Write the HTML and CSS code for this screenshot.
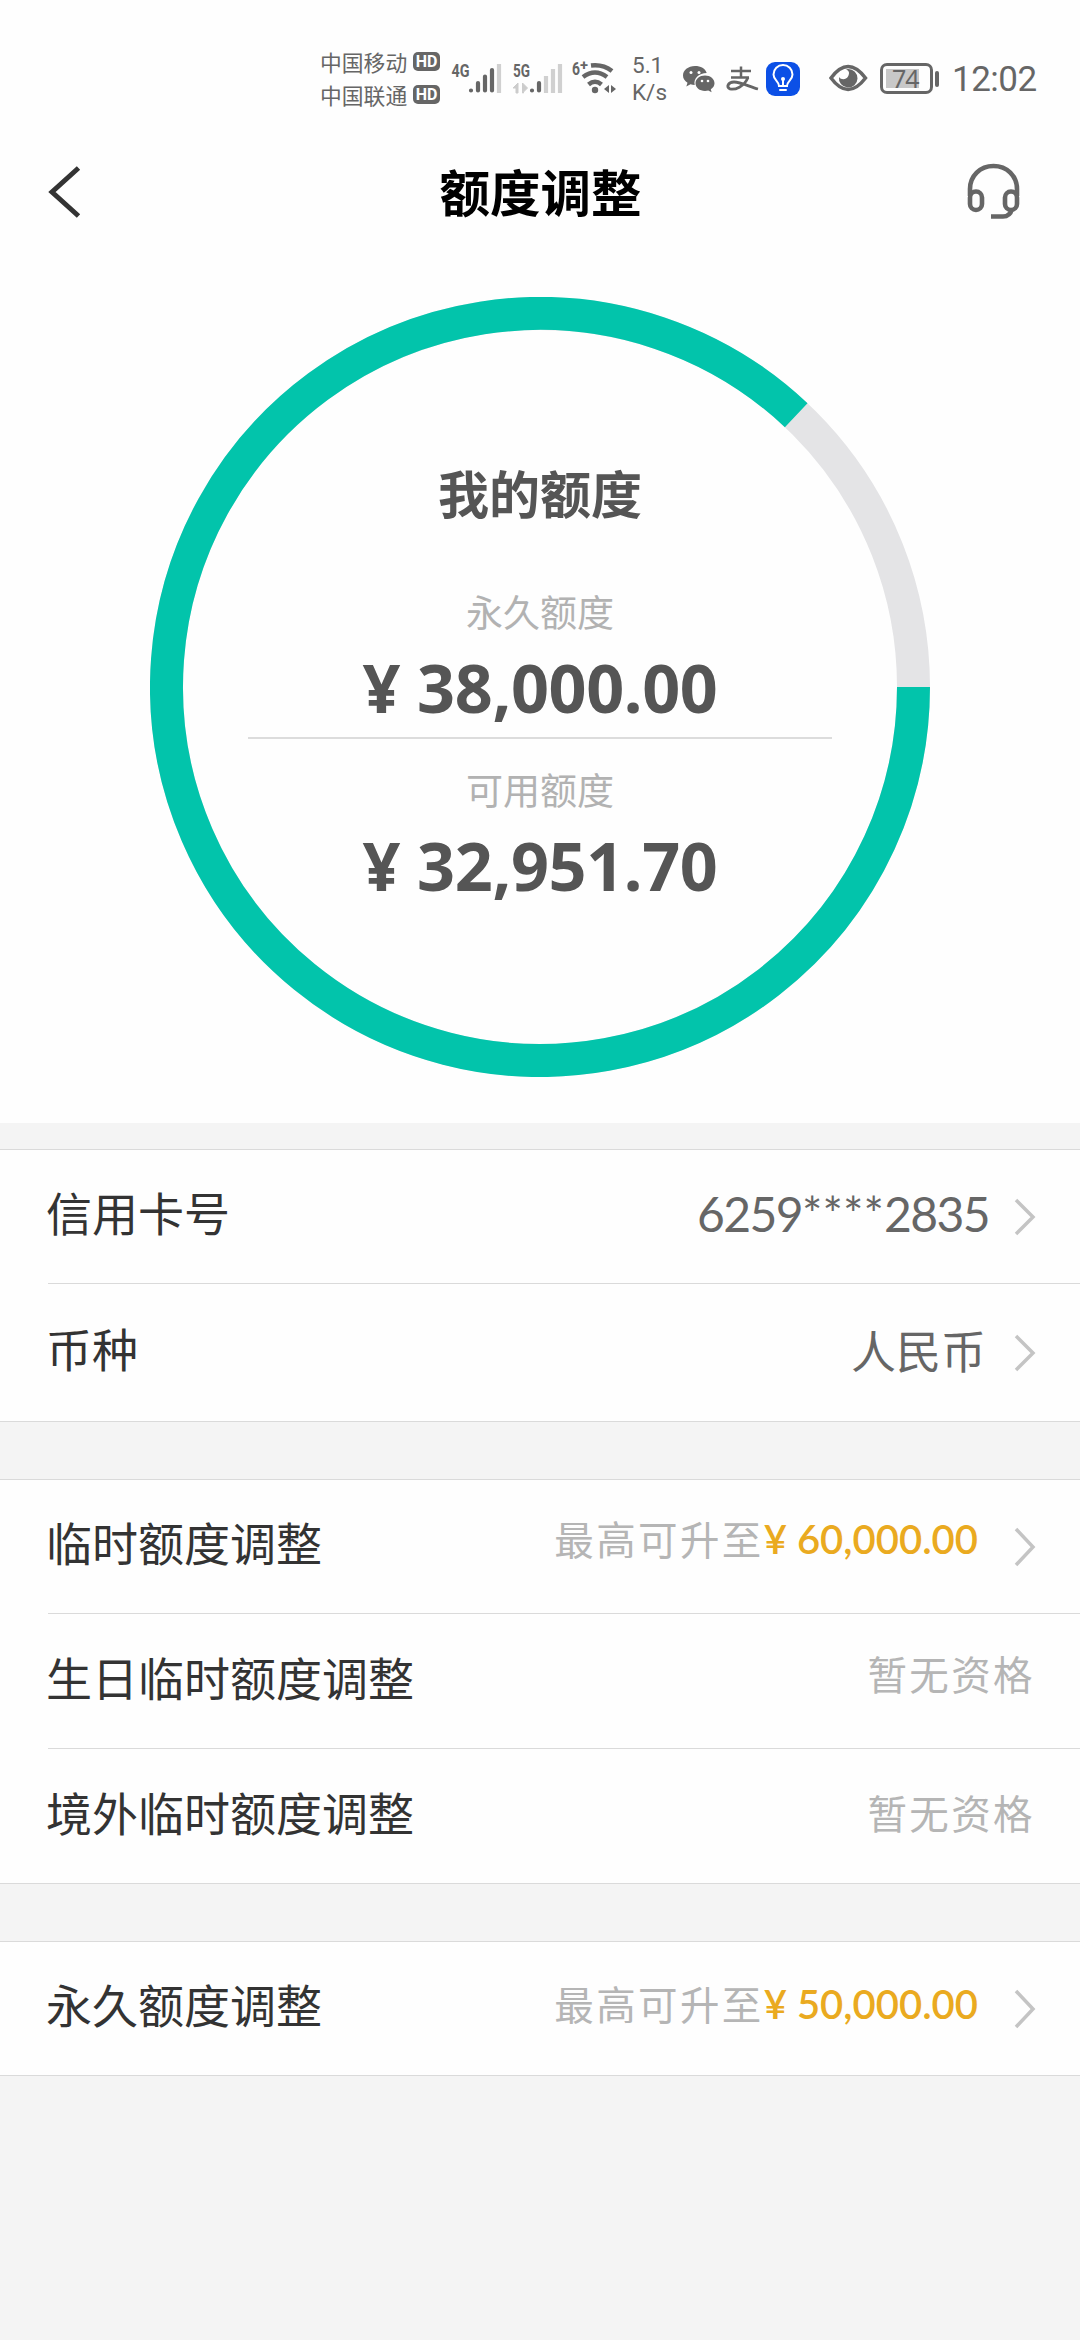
FILE: index.html
```html
<!DOCTYPE html>
<html lang="zh-CN">
<head>
<meta charset="utf-8">
<title>额度调整</title>
<link rel="stylesheet" href="styles.css">
</head>
<body>
<header class="status">
  <div class="carriers">
    <div class="carrier">中国移动<span class="hd">HD</span></div>
    <div class="carrier">中国联通<span class="hd">HD</span></div>
  </div>
  <svg class="signals" viewBox="440 50 180 60" width="180" height="60">
    <g font-family="Roboto, sans-serif" font-weight="700" fill="#666">
      <text x="451.500" y="76.500" font-size="19" textLength="18" lengthAdjust="spacingAndGlyphs">4G</text>
      <text x="513" y="76.500" font-size="19" textLength="17" lengthAdjust="spacingAndGlyphs">5G</text>
      <text x="572" y="75" font-size="18" textLength="8" lengthAdjust="spacingAndGlyphs">6</text>
      <text x="580" y="70" font-size="14" textLength="8" lengthAdjust="spacingAndGlyphs">+</text>
    </g>
    <g stroke="#666" stroke-width="4.200" stroke-linecap="round">
      <path d="M471 90.500V90.500M478 83V90.500M485 76.500V90.500M492 70V90.500"/>
      <path d="M532 90.500V90.500M539 83V90.500"/>
    </g>
    <path d="M499 64V93M546 76V93M553 69V93M560 64V93" stroke="#d0d0d0" stroke-width="4.200"/>
    <path d="M518 83v10h-2v-5h-3zM522.500 83v10h1v-1l4-4z" fill="#ccc" stroke="#ccc"/>
    <g fill="none" stroke="#666" stroke-width="4.500">
      <path d="M591 65.500Q603 64 612 71"/>
      <path d="M583 77Q595 68 607 77"/>
      <path d="M588.500 84.500Q595 79 601.500 84.500"/>
    </g>
    <circle cx="595" cy="90" r="3.200" fill="#666"/>
    <path d="M609 85v8l-5-4zM611 85v8l5-4z" fill="#666"/>
  </svg>
  <div class="speed">5.1<br>K/s</div>
  <svg class="apps" viewBox="680 58 124 42" width="124" height="42">
    <path d="M695 66c-7 0-12 4.300-12 9.500 0 3 1.700 5.500 4.500 7.300l-1.200 3.600 4.200-2.100c1.300.4 2.700.6 4.200.6-1.500-7 4.500-12 12-12-1.300-4.200-6-6.900-11.700-6.900z" fill="#666"/>
    <path d="M705 75.500c-5.500 0-9.500 3.500-9.500 7.800s4 7.700 9.500 7.700c1.200 0 2.300-.2 3.300-.5l3.300 1.700-.8-2.900c2.300-1.400 3.700-3.500 3.700-6 0-4.300-4-7.800-9.500-7.800z" fill="#666"/>
    <g fill="#fff"><circle cx="691" cy="72.500" r="1.500"/><circle cx="699" cy="72.500" r="1.500"/><circle cx="702" cy="81" r="1.300"/><circle cx="708" cy="81" r="1.300"/></g>
    <g fill="none" stroke="#666" stroke-width="2.500">
      <path d="M731 71H751M741 66.500V77M731 77.500H749"/>
      <path d="M748 77.500C744 87 735 90 730 89C726 87 728 82 734 82C741 82 750 87 758 89" stroke-width="2.800"/>
    </g>
    <rect x="766" y="62" width="34" height="34" rx="9" fill="#0c50e6"/>
    <g fill="none" stroke="#fff" stroke-width="2" stroke-linecap="round">
      <path d="M779 86c0-5-5.500-6-5.500-11.500a9.500 9.500 0 0 1 19 0C792.500 80 787 81 787 86z"/>
      <path d="M780 90H786M783 79V85"/>
    </g>
    <circle cx="783" cy="79" r="2" fill="#fff"/>
  </svg>
  <svg class="eye" viewBox="828 64 40 28" width="40" height="28">
    <path d="M831 78Q848 55 865.500 78Q848 101 831 78z" fill="none" stroke="#666" stroke-width="3.500"/>
    <path d="M848 69a9.300 9.300 0 1 1-9 8c2 3 7 3 9-.5s1-6-2-7z" fill="#666"/>
  </svg>
  <div class="battery"><span class="charge">74</span></div>
  <div class="clock">12:02</div>
</header>

<nav class="titlebar">
  <svg viewBox="0 0 64 56" width="64" height="56"><path d="M35.500 4L9 28L35.500 52" fill="none" stroke="#333" stroke-width="5"/></svg>
  <h1 class="title">额度调整</h1>
  <svg viewBox="960 160 64 64" width="64" height="64" fill="none" stroke="#666" stroke-width="4.600">
    <path d="M970 196V189C970 176 980 166 993.500 166S1017 176 1017 189V196"/>
    <rect x="970" y="191.500" width="12" height="18.500" rx="6"/>
    <rect x="1005" y="191.500" width="12" height="18.500" rx="6"/>
    <path d="M1012 209Q1010 216.500 1003 216.500H991"/>
  </svg>
</nav>

<section class="gauge">
  <svg class="ring" viewBox="0 0 780 780" fill="none" stroke-width="33">
    <circle cx="390" cy="390" r="373.500" stroke="#e4e4e6"/>
    <path d="M763.500 390A373.500 373.500 0 1 1 646.200 118.200" stroke="#02c4ab"/>
  </svg>
  <div class="summary">
    <h2 class="heading">我的额度</h2>
    <div class="label">永久额度</div>
    <div class="amount">¥ 38,000.00</div>
    <div class="rule"></div>
    <div class="label">可用额度</div>
    <div class="amount">¥ 32,951.70</div>
  </div>
</section>

<main class="groups">
  <section class="group">
    <div class="row"><span class="name">信用卡号</span><span class="value num">6259<span class="stars">****</span>2835</span><svg class="arrow" viewBox="0 0 24 40"><path d="M3 3L20 20L3 37"/></svg></div>
    <div class="row tall"><span class="name">币种</span><span class="value">人民币</span><svg class="arrow" viewBox="0 0 24 40"><path d="M3 3L20 20L3 37"/></svg></div>
  </section>
  <section class="group">
    <div class="row"><span class="name">临时额度调整</span><span class="hint">最高可升至<b class="money">¥ 60,000.00</b></span><svg class="arrow" viewBox="0 0 24 40"><path d="M3 2L20 20L3 38"/></svg></div>
    <div class="row"><span class="name">生日临时额度调整</span><span class="hint none">暂无资格</span></div>
    <div class="row"><span class="name">境外临时额度调整</span><span class="hint none low">暂无资格</span></div>
  </section>
  <section class="group">
    <div class="row"><span class="name">永久额度调整</span><span class="hint">最高可升至<b class="money">¥ 50,000.00</b></span><svg class="arrow" viewBox="0 0 24 40"><path d="M3 2L20 20L3 38"/></svg></div>
  </section>
</main>
</body>
</html>
```
FILE: styles.css
```css
* { box-sizing: border-box; }
body {
  margin: 0;
  width: 1080px;
  height: 2340px;
  overflow: hidden;
  background: #f4f4f4;
  color: #333;
  font-family: "Noto Sans", "Noto Sans CJK SC", sans-serif;
}
svg { display: block; flex: none; }
h1, h2 { margin: 0; }

.status {
  display: flex;
  height: 130px;
  padding-left: 320px;
  background: #fefefe;
  color: #666;
}
.carriers { width: 120px; padding-top: 45px; }
.carrier {
  display: flex;
  align-items: center;
  height: 33px;
  font: 21.8px/31px "Noto Sans CJK SC", sans-serif;
  white-space: nowrap;
}
.hd {
  width: 28px;
  height: 19px;
  margin-left: 6px;
  border-radius: 5px;
  background: #666;
  color: #fff;
  font: bold 16px/19px Roboto, sans-serif;
  text-align: center;
}
.signals { margin-top: 50px; }
.speed {
  width: 60px;
  padding: 52px 0 0 12px;
  font: 22.5px/27px Roboto, sans-serif;
}
.apps { margin-top: 58px; }
.eye { margin: 64px 0 0 24px; }
.battery {
  position: relative;
  width: 53px;
  height: 31px;
  margin: 63px 0 0 12px;
  padding: 3px;
  border: 3px solid #666;
  border-radius: 7px;
}
.battery::after {
  position: absolute;
  content: "";
  left: 52px;
  top: 5px;
  width: 4px;
  height: 16px;
  border-radius: 2px;
  background: #666;
}
.charge {
  display: block;
  width: 33px;
  height: 19px;
  background: #c8c8c8;
  font: 25px/18px "Noto Sans", sans-serif;
  text-indent: 6px;
  letter-spacing: -1px;
}
.clock {
  margin-left: 19px;
  padding-top: 60px;
  font: 35px/40px Roboto, sans-serif;
  letter-spacing: -0.5px;
}

.titlebar {
  display: flex;
  align-items: center;
  justify-content: space-between;
  height: 124px;
  padding: 0 56px 0 43px;
  background: #fefefe;
}
.title {
  margin: -5px -14px 0 0;
  color: #000;
  font: bold 50.5px/60px "Noto Sans CJK SC", sans-serif;
}

.gauge {
  display: grid;
  justify-content: center;
  height: 869px;
  padding-top: 43px;
  background: #fefefe;
}
.ring, .summary { grid-area: 1 / 1; width: 780px; height: 780px; }
.summary {
  display: flex;
  flex-direction: column;
  align-items: center;
  padding-top: 165px;
}
.heading {
  color: #555;
  font: bold 51px/60px "Noto Sans CJK SC", sans-serif;
}
.label {
  margin-top: 64px;
  color: #b2b2b2;
  font: 37px/50px "Noto Sans CJK SC", sans-serif;
}
.amount {
  margin-top: 16px;
  color: #555;
  font: bold 66.5px/70px "Noto Sans", sans-serif;
  letter-spacing: -0.4px;
  white-space: nowrap;
}
.rule { width: 584px; height: 2px; margin-top: 15px; background: #dcdcdc; }
.rule + .label { margin-top: 25px; }

.groups { display: flex; flex-direction: column; gap: 57px; padding-top: 26px; }
.group { border: solid #dadada; border-width: 1px 0; background: #fefefe; }
.row {
  display: flex;
  align-items: center;
  height: 133px;
  margin-left: 48px;
  padding-right: 43px;
}
.row + .row { height: 135px; border-top: 1px solid #dadada; }
.row + .row.tall { height: 138px; }
.name {
  margin: -11px auto 0 -2px;
  font: 46px/60px "Noto Sans CJK SC", sans-serif;
}
.value {
  margin-top: -5px;
  color: #666;
  font: 45px/60px "Noto Sans CJK SC", sans-serif;
}
.num {
  margin-right: -3px;
  font-family: Lato, sans-serif;
  font-size: 48px;
  letter-spacing: -1.6px;
}
.stars { letter-spacing: 0.1px; }
.arrow {
  width: 24px;
  height: 40px;
  margin-left: 27px;
  fill: none;
  stroke: #c4c4c4;
  stroke-width: 3.5;
}
.hint {
  display: flex;
  margin-top: -16px;
  color: #b5b5b5;
  font: 39.5px/50px "Noto Sans CJK SC", sans-serif;
  letter-spacing: 2.4px;
}
.money {
  margin-right: 8px;
  color: #eaaa20;
  font: 600 40px/52px Lato, sans-serif;
  letter-spacing: 0;
}
.none { margin-right: 2px; }
.low { margin-top: -9px; }
.group:last-child .hint { margin-top: -10px; }
```
